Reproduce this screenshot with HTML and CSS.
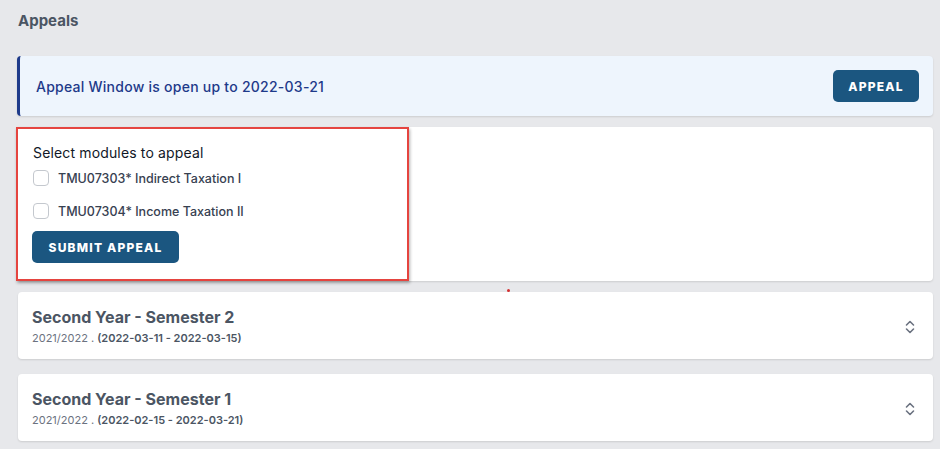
FILE: index.html
```html
<!DOCTYPE html>
<html>
<head>
<meta charset="utf-8">
<link rel="stylesheet" href="styles.css">
</head>
<body>
<div class="page">
  <h1 class="title">Appeals</h1>
  <div class="alert">
    <span class="alert-text">Appeal Window is open up to 2022-03-21</span>
    <button class="btn btn-appeal">APPEAL</button>
  </div>
  <div class="card card-form">
    <div class="highlight"></div>
    <div class="form-title">Select modules to appeal</div>
    <label class="check"><span class="box"></span>TMU07303* Indirect Taxation I</label>
    <label class="check"><span class="box"></span>TMU07304* Income Taxation II</label>
    <button class="btn btn-submit">SUBMIT APPEAL</button>
    <span class="dot"></span>
  </div>
  <div class="card sem sem-first">
    <div class="sem-info">
      <div class="sem-title">Second Year - Semester 2</div>
      <div class="sem-sub">2021/2022 . <b>(2022-03-11 - 2022-03-15)</b></div>
    </div>
    <svg class="chev" width="12" height="16" viewBox="0 0 12 16"><path d="M2.5 6 L6 2.5 L9.5 6 M2.5 10 L6 13.5 L9.5 10" fill="none" stroke="#6b7280" stroke-width="1.6" stroke-linecap="round" stroke-linejoin="round"/></svg>
  </div>
  <div class="card sem sem-second">
    <div class="sem-info">
      <div class="sem-title">Second Year - Semester 1</div>
      <div class="sem-sub">2021/2022 . <b>(2022-02-15 - 2022-03-21)</b></div>
    </div>
    <svg class="chev" width="12" height="16" viewBox="0 0 12 16"><path d="M2.5 6 L6 2.5 L9.5 6 M2.5 10 L6 13.5 L9.5 10" fill="none" stroke="#6b7280" stroke-width="1.6" stroke-linecap="round" stroke-linejoin="round"/></svg>
  </div>
</div>
</body>
</html>
```
FILE: styles.css
```css
html, body {
  margin: 0;
  padding: 0;
  background: #e7e8eb;
  font-family: Inter, "Liberation Sans", sans-serif;
}
.page {
  padding: 0 7px 0 17px;
  height: 449px;
  overflow: hidden;
}
.title {
  margin: 0;
  padding: 12px 0 0 1px;
  font-size: 15px;
  font-weight: 700;
  color: #4b5563;
  line-height: 17px;
  height: 44px;
  box-sizing: border-box;
}
.alert {
  margin-top: 12px;
  height: 60px;
  background: #eef5fd;
  border-left: 3px solid #1e3a8a;
  border-radius: 4px;
  box-shadow: 0 1px 2px rgba(0,0,0,0.12);
  display: flex;
  align-items: center;
  justify-content: space-between;
  padding: 0 14px 0 16px;
}
.alert-text {
  font-size: 14px;
  font-weight: 500;
  letter-spacing: 0.25px;
  color: #1e3a8a;
}
.btn {
  border: none;
  background: #1b5680;
  color: #fff;
  font-family: Inter, "Liberation Sans", sans-serif;
  font-weight: 800;
  letter-spacing: 1.2px;
  border-radius: 5px;
  font-size: 12px;
  padding: 0;
}
.btn-appeal {
  width: 86px;
  height: 32px;
}
.card {
  background: #fff;
  border-radius: 4px;
  box-shadow: 0 1px 2px rgba(0,0,0,0.12);
}
.card-form {
  position: relative;
  margin-top: 11px;
  height: 154px;
  box-sizing: border-box;
  padding: 17px 15px 0 15px;
}
.highlight {
  position: absolute;
  left: -1px;
  top: 0;
  width: 393px;
  height: 154px;
  box-sizing: border-box;
  border: 2px solid #e5443f;
  box-shadow: 1px 2px 3px rgba(0,0,0,0.3);
}
.form-title {
  font-size: 14px;
  color: #111827;
  line-height: 17px;
  padding-left: 1px;
  letter-spacing: 0.15px;
}
.check {
  display: flex;
  align-items: center;
  font-size: 12.5px;
  color: #374151;
  font-weight: 500;
  height: 18px;
  margin-top: 8px;
  padding-left: 1px;
}
.check + .check {
  margin-top: 15px;
}
.box {
  width: 14px;
  height: 14px;
  border: 1px solid #c4c8ce;
  border-radius: 4px;
  margin-right: 9px;
  background: #fff;
}
.btn-submit {
  margin-top: 11px;
  width: 147px;
  height: 32px;
  display: block;
}
.dot {
  position: absolute;
  left: 490px;
  top: 162px;
  width: 3px;
  height: 3px;
  border-radius: 50%;
  background: #d32f2f;
}
.sem {
  height: 67px;
  box-sizing: border-box;
  display: flex;
  align-items: center;
  justify-content: space-between;
  padding: 0 17px 0 14px;
  margin-left: 1px;
}
.sem-first { margin-top: 11px; }
.sem-second { margin-top: 15px; }
.sem-info {
  padding-top: 1px;
}
.sem-title {
  font-size: 16px;
  font-weight: 700;
  color: #4b5563;
  line-height: 20px;
}
.sem-sub {
  font-size: 11px;
  color: #6b7280;
  margin-top: 4px;
}
.sem-sub b {
  font-weight: 600;
  color: #4b5563;
}
.chev {
  margin-top: 2px;
}
```
